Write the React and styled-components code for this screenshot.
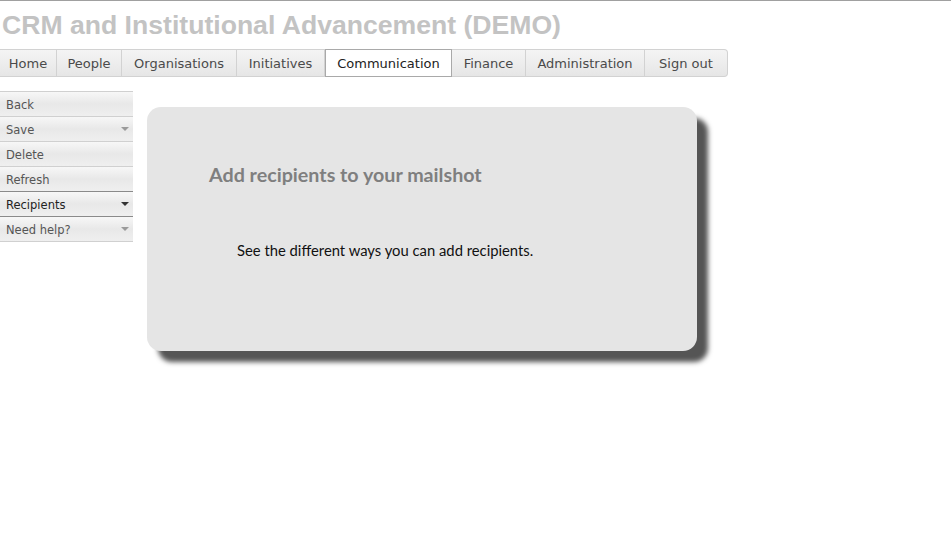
import React from 'react'
import styled, { createGlobalStyle } from 'styled-components'

const tabs = [
  { label: 'Home', width: 57 },
  { label: 'People', width: 65 },
  { label: 'Organisations', width: 115 },
  { label: 'Initiatives', width: 88 },
  { label: 'Communication', width: 127, active: true },
  { label: 'Finance', width: 74 },
  { label: 'Administration', width: 119 },
  { label: 'Sign out', width: 83 }
]

const actions = [
  { label: 'Back' },
  { label: 'Save', arrow: 'light' },
  { label: 'Delete' },
  { label: 'Refresh' },
  { label: 'Recipients', arrow: 'dark', selected: true },
  { label: 'Need help?', arrow: 'light' }
]

function App () {
  return (
    <Page>
      <GlobalStyle />
      <Title>CRM and Institutional Advancement (DEMO)</Title>

      <NavBar>
        {tabs.map((tab, i) => (
          <Tab
            key={tab.label}
            $width={tab.width}
            $active={tab.active}
            $first={i === 0}
            $last={i === tabs.length - 1}
          >
            {tab.label}
          </Tab>
        ))}
      </NavBar>

      <Body>
        <Sidebar>
          {actions.map((action, i) => (
            <Action
              key={action.label}
              $selected={action.selected}
              $afterSelected={i > 0 && actions[i - 1].selected}
            >
              {action.label}
              {action.arrow ? <Arrow $dark={action.arrow === 'dark'} /> : null}
            </Action>
          ))}
        </Sidebar>

        <Content>
          <Card>
            <CardTitle>Add recipients to your mailshot</CardTitle>
            <CardText>See the different ways you can add recipients.</CardText>
          </Card>
        </Content>
      </Body>
    </Page>
  )
}

const GlobalStyle = createGlobalStyle`
  html, body {
    margin: 0;
    padding: 0;
    background: #ffffff;
  }
`

const Page = styled.div`
  border-top: 1px solid #a0a0a0;
  min-height: 533px;
`

const Title = styled.h1`
  margin: 0;
  padding: 0 0 0 2px;
  height: 48px;
  line-height: 49px;
  font-family: 'Liberation Sans', Arial, sans-serif;
  font-size: 26.6px;
  font-weight: bold;
  color: #c3c3c3;
  white-space: nowrap;
`

const NavBar = styled.nav`
  display: flex;
  align-items: stretch;
  height: 28px;
`

const Tab = styled.div`
  display: flex;
  align-items: center;
  justify-content: center;
  width: ${(p) => p.$width}px;
  box-sizing: border-box;
  padding-top: 1px;
  font-family: 'DejaVu Sans', Verdana, sans-serif;
  font-size: 13px;
  color: ${(p) => (p.$active ? '#222222' : '#4a4a4a')};
  background: ${(p) =>
    p.$active ? '#ffffff' : 'linear-gradient(#f4f4f4, #e6e6e6)'};
  border: 1px solid ${(p) => (p.$active ? '#a9a9a9' : '#d2d2d2')};
  border-left-width: ${(p) => (p.$active ? '1px' : '0')};
  border-right-width: 1px;
  border-radius: ${(p) => (p.$last ? '0 4px 4px 0' : '0')};
`

const Body = styled.div`
  display: flex;
  align-items: flex-start;
  padding-top: 14px;
`

const Sidebar = styled.aside`
  flex: 0 0 133px;
  display: flex;
  flex-direction: column;
`

const Action = styled.div`
  position: relative;
  height: 25px;
  line-height: 26px;
  box-sizing: border-box;
  padding-left: 6px;
  font-family: 'DejaVu Sans', Verdana, sans-serif;
  font-size: 11.5px;
  color: ${(p) => (p.$selected ? '#222222' : '#555555')};
  background: linear-gradient(#f7f7f7, #e8e8e8 50%, #efefef);
  border-top: 1px solid
    ${(p) => (p.$selected || p.$afterSelected ? '#8a8a8a' : '#d0d0d0')};

  &:last-child {
    height: 26px;
    border-bottom: 1px solid #d0d0d0;
  }
`

const Arrow = styled.span`
  position: absolute;
  right: 4px;
  top: 10px;
  width: 0;
  height: 0;
  border-left: 4px solid transparent;
  border-right: 4px solid transparent;
  border-top: 4px solid ${(p) => (p.$dark ? '#333333' : '#9a9a9a')};
`

const Content = styled.main`
  flex: 1;
  padding: 16px 0 0 14px;
`

const Card = styled.section`
  width: 550px;
  height: 244px;
  box-sizing: border-box;
  padding: 56px 0 0 62px;
  background: #e5e5e5;
  border-radius: 14px;
  box-shadow: 11px 11px 5px #555555;
`

const CardTitle = styled.h2`
  margin: 0;
  font-family: Lato, 'Open Sans', sans-serif;
  font-size: 19.7px;
  font-weight: bold;
  color: #7f7f7f;
`

const CardText = styled.p`
  margin: 55px 0 0 28px;
  font-family: Lato, 'Open Sans', sans-serif;
  font-size: 14.8px;
  color: #111111;
`

export default App
